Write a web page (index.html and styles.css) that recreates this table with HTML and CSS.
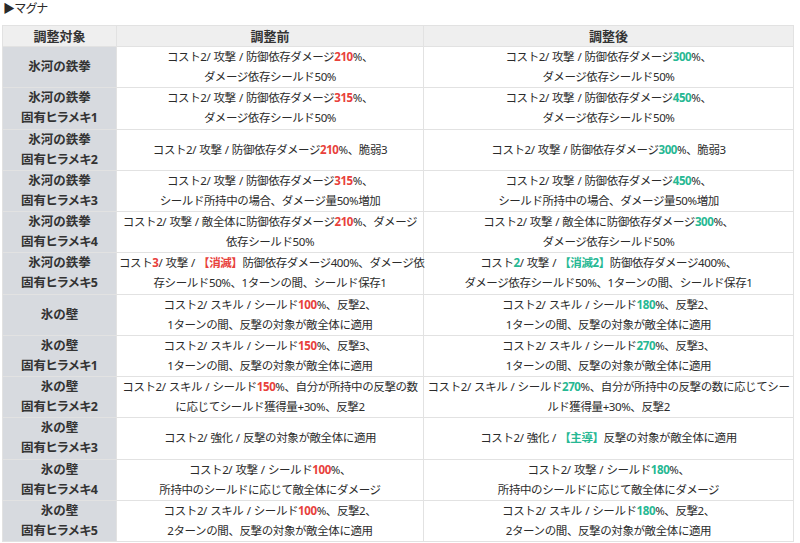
FILE: index.html
```html
<!DOCTYPE html>
<html lang="ja">
<head>
<meta charset="utf-8">
<title>マグナ</title>
<link rel="stylesheet" href="styles.css">
</head>
<body>
<div class="page">
  <div class="heading">▶マグナ</div>
  <table class="tbl">
    <colgroup>
      <col class="c1">
      <col class="c2">
      <col class="c3">
    </colgroup>
    <thead>
      <tr><th>調整対象</th><th>調整前</th><th>調整後</th></tr>
    </thead>
    <tbody>
      <tr>
        <th class="name">氷河の鉄拳</th>
        <td>コスト2/ 攻撃 / 防御依存ダメージ<span class="r">210</span>%、<br>ダメージ依存シールド50%</td>
        <td>コスト2/ 攻撃 / 防御依存ダメージ<span class="g">300</span>%、<br>ダメージ依存シールド50%</td>
      </tr>
      <tr>
        <th class="name">氷河の鉄拳<br>固有ヒラメキ1</th>
        <td>コスト2/ 攻撃 / 防御依存ダメージ<span class="r">315</span>%、<br>ダメージ依存シールド50%</td>
        <td>コスト2/ 攻撃 / 防御依存ダメージ<span class="g">450</span>%、<br>ダメージ依存シールド50%</td>
      </tr>
      <tr>
        <th class="name">氷河の鉄拳<br>固有ヒラメキ2</th>
        <td>コスト2/ 攻撃 / 防御依存ダメージ<span class="r">210</span>%、脆弱3</td>
        <td>コスト2/ 攻撃 / 防御依存ダメージ<span class="g">300</span>%、脆弱3</td>
      </tr>
      <tr>
        <th class="name">氷河の鉄拳<br>固有ヒラメキ3</th>
        <td>コスト2/ 攻撃 / 防御依存ダメージ<span class="r">315</span>%、<br>シールド所持中の場合、ダメージ量50%増加</td>
        <td>コスト2/ 攻撃 / 防御依存ダメージ<span class="g">450</span>%、<br>シールド所持中の場合、ダメージ量50%増加</td>
      </tr>
      <tr>
        <th class="name">氷河の鉄拳<br>固有ヒラメキ4</th>
        <td>コスト2/ 攻撃 / 敵全体に防御依存ダメージ<span class="r">210</span>%、ダメージ<br>依存シールド50%</td>
        <td>コスト2/ 攻撃 / 敵全体に防御依存ダメージ<span class="g">300</span>%、<br>ダメージ依存シールド50%</td>
      </tr>
      <tr>
        <th class="name">氷河の鉄拳<br>固有ヒラメキ5</th>
        <td>コスト<span class="r">3</span>/ 攻撃 / <span class="r">【消滅】</span>防御依存ダメージ400%、ダメージ依<br>存シールド50%、1ターンの間、シールド保存1</td>
        <td>コスト<span class="g">2</span>/ 攻撃 / <span class="g">【消滅2】</span>防御依存ダメージ400%、<br>ダメージ依存シールド50%、1ターンの間、シールド保存1</td>
      </tr>
      <tr>
        <th class="name">氷の壁</th>
        <td>コスト2/ スキル / シールド<span class="r">100</span>%、反撃2、<br>1ターンの間、反撃の対象が敵全体に適用</td>
        <td>コスト2/ スキル / シールド<span class="g">180</span>%、反撃2、<br>1ターンの間、反撃の対象が敵全体に適用</td>
      </tr>
      <tr>
        <th class="name">氷の壁<br>固有ヒラメキ1</th>
        <td>コスト2/ スキル / シールド<span class="r">150</span>%、反撃3、<br>1ターンの間、反撃の対象が敵全体に適用</td>
        <td>コスト2/ スキル / シールド<span class="g">270</span>%、反撃3、<br>1ターンの間、反撃の対象が敵全体に適用</td>
      </tr>
      <tr>
        <th class="name">氷の壁<br>固有ヒラメキ2</th>
        <td>コスト2/ スキル / シールド<span class="r">150</span>%、自分が所持中の反撃の数<br>に応じてシールド獲得量+30%、反撃2</td>
        <td>コスト2/ スキル / シールド<span class="g">270</span>%、自分が所持中の反撃の数に応じてシー<br>ルド獲得量+30%、反撃2</td>
      </tr>
      <tr>
        <th class="name">氷の壁<br>固有ヒラメキ3</th>
        <td>コスト2/ 強化 / 反撃の対象が敵全体に適用</td>
        <td>コスト2/ 強化 / <span class="g">【主導】</span>反撃の対象が敵全体に適用</td>
      </tr>
      <tr>
        <th class="name">氷の壁<br>固有ヒラメキ4</th>
        <td>コスト2/ 攻撃 / シールド<span class="r">100</span>%、<br>所持中のシールドに応じて敵全体にダメージ</td>
        <td>コスト2/ 攻撃 / シールド<span class="g">180</span>%、<br>所持中のシールドに応じて敵全体にダメージ</td>
      </tr>
      <tr>
        <th class="name">氷の壁<br>固有ヒラメキ5</th>
        <td>コスト2/ スキル / シールド<span class="r">100</span>%、反撃2、<br>2ターンの間、反撃の対象が敵全体に適用</td>
        <td>コスト2/ スキル / シールド<span class="g">180</span>%、反撃2、<br>2ターンの間、反撃の対象が敵全体に適用</td>
      </tr>
    </tbody>
  </table>
</div>
</body>
</html>
```

FILE: styles.css
```css
html, body {
  margin: 0;
  padding: 0;
  background: #ffffff;
}

body {
  font-family: "Noto Sans", "Noto Sans CJK JP", sans-serif;
  color: #333333;
}

.page {
  padding: 0 7px 0 2px;
}

.heading {
  height: 18px;
  line-height: 18px;
  font-size: 12px;
  padding-left: 1px;
  margin-bottom: 7px;
  color: #2a2a2a;
  font-feature-settings: "palt";
}

.tbl {
  width: 791px;
  border-collapse: collapse;
  table-layout: fixed;
}

.c1 { width: 114px; }
.c2 { width: 307px; }
.c3 { width: 370px; }

.tbl th,
.tbl td {
  border: 1px solid #e2e2e2;
  padding: 0 2px;
  text-align: center;
  vertical-align: middle;
  white-space: nowrap;
}

.tbl thead th {
  height: 20px;
  line-height: 20px;
  font-size: 13px;
  font-weight: bold;
  background: #efefef;
  color: #333333;
  font-feature-settings: "palt";
}

.tbl tbody tr {
  height: 41.25px;
}

.tbl tbody td {
  font-size: 11.5px;
  line-height: 20px;
  letter-spacing: -0.4px;
  word-spacing: 0.6px;
  color: #2b2b2b;
}

.tbl tbody th.name {
  font-size: 12.5px;
  line-height: 20px;
  font-weight: bold;
  background: #d7dadf;
  color: #333333;
  font-feature-settings: "palt";
}

.r {
  color: #e8413b;
  font-weight: bold;
}

.g {
  color: #26b893;
  font-weight: bold;
}
```
